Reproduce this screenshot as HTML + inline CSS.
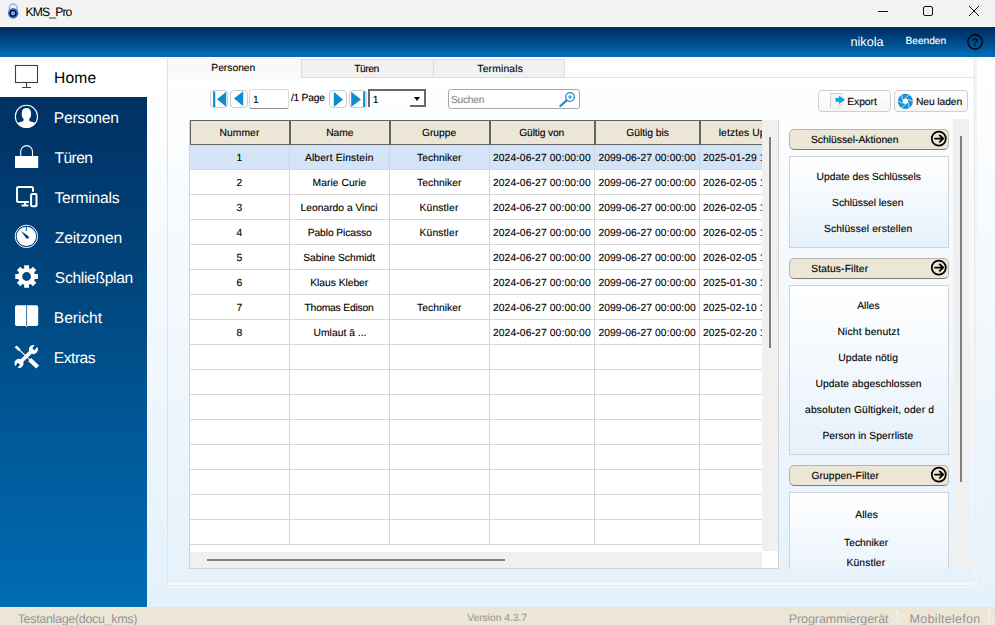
<!DOCTYPE html>
<html lang="de">
<head>
<meta charset="utf-8">
<title>KMS_Pro</title>
<style>
*{box-sizing:border-box;margin:0;padding:0}
html,body{width:995px;height:625px;overflow:hidden;background:#fff}
body{font-family:"Liberation Sans",sans-serif;font-size:10.3px;color:#000;position:relative;text-rendering:geometricPrecision}
.abs,.tx,svg{position:absolute}
.tx{white-space:nowrap;line-height:20px;display:block}
.sk{-webkit-text-stroke:0.12px}
#titlebar{left:0;top:0;width:995px;height:27px;background:#f3f3f3;border-bottom:1px solid #fff}
#hdr{left:0;top:27px;width:995px;height:30px;background:linear-gradient(#002b5d,#004a88 50%,#006fba)}
#side{left:0;top:57px;width:147px;height:550px;background:linear-gradient(#003263 0,#003366 60px,#004379 200px,#005a9a 393px,#006cb3 550px)}
#home{left:0;top:57px;width:167px;height:40px;background:#fff}
#mainbg{left:147px;top:57px;width:848px;height:550px;background:linear-gradient(#ffffff 0,#f6fafe 180px,#e4f1fb 549px)}
#status{left:0;top:607px;width:995px;height:18px;background:#ece6d7}
#panel{left:167px;top:58px;width:810px;height:529px;border:1px solid #f4f4f4;border-left-color:#e0e2e4;border-top:0;box-shadow:inset -1px 0 0 0 #f4f4f4,inset -2px -1px 0 0 #e9e9e9,inset -3px -3px 0 0 #fafafa}
.tab{top:59px;height:19px;background:#f1f1f1;border:1px solid #dddddd}
.tab.act{top:58px;height:21px;background:#f9f9f9;border:0}
#tabline{left:301px;top:77px;width:674px;height:1px;background:#e3e3e3}
#gw{left:189px;top:120px;width:590px;height:449px;background:#fff;border:1px solid #d2d2d2;border-top:0}
#grid{left:0;top:0;width:572px;height:431px;background:#fff;overflow:hidden}
.hc{top:0;height:25px;background:#ece6d6;border:1px solid #636363}
.row{left:0;width:572px;height:25px;border-bottom:1px solid #d8d8d8}
.row.sel{background:#d3e4f6}
.vl{top:25px;width:1px;height:400px;background:#d4d4d4}
#vsb{left:572px;top:0;width:16px;height:431px;background:#f0f0f0}
#vsb i{position:absolute;left:7px;top:17px;width:2px;height:211px;background:#7f7f7f}
#hsb{left:0;top:432px;width:572px;height:16px;background:#f0f0f0}
#hsb i{position:absolute;left:17px;top:7px;width:298px;height:2px;background:#7f7f7f}
.pb{top:90px;width:18px;height:18px;border:1px solid #cdcdcd;border-radius:4px;background:#fff}
#pgin{left:249px;top:89px;width:40px;height:20px;border:1px solid #dadada;border-bottom:1px solid #8e8e8e;border-radius:3px;background:#fff}
#pgsel{left:368px;top:89px;width:58px;height:18px;background:#fff;border-left:2px solid #696969;border-top:2px solid #696969}
#pgsel i{position:absolute;left:40px;top:0;width:16px;height:16px;border-right:2px solid #696969;border-bottom:2px solid #696969;background:#fff}
#pgsel b{position:absolute;left:44px;top:6px;width:0;height:0;border-left:3.5px solid transparent;border-right:3.5px solid transparent;border-top:4px solid #000}
#search{left:448px;top:89px;width:132px;height:20px;border:1px solid #a9a9a9;border-radius:3px;background:#fff}
.btn{top:90px;height:22px;border:1px solid #cfcfcf;border-radius:4px;background:linear-gradient(#ffffff,#f6f6f6)}
#rp{left:783px;top:119px;width:187px;height:450px;overflow:hidden}
#rsb{left:170px;top:0;width:16px;height:450px;background:#f0f0f0}
#rsb i{position:absolute;left:7px;top:17px;width:2px;height:346px;background:#7f7f7f}
.gh{left:6px;width:160px;height:21px;background:#ece6d6;border:1px solid #b9b5aa;border-bottom-color:#7d7a72;border-radius:5px}
.gb{left:6px;width:160px;border:1px solid #cfd3d6;background:linear-gradient(#ffffff,#e6f1fb)}
</style>
</head>
<body>
<div id="titlebar" class="abs"></div>
<svg style="left:6px;top:1px" width="16" height="20" viewBox="0 0 16 20">
<path d="M3.400 10V6.800a3.800 3.800 0 0 1 7.600 0V10" fill="none" stroke="#8fb6ee" stroke-width="1.400"/>
<circle cx="7.200" cy="12.300" r="5.200" fill="#2f74da"/>
<circle cx="7" cy="12.300" r="2.900" fill="#6fa4ee" stroke="#060a12" stroke-width="1.300"/>
</svg>
<span class="tx" style="left:25.60px;letter-spacing:-0.90px;top:2px;font-size:12.2px;color:#000;">KMS_Pro</span>
<svg style="left:870px;top:0" width="125" height="27" viewBox="0 0 125 27" fill="none" stroke="#111" stroke-width="1">
<path d="M8 11.5h10"/><rect x="53.5" y="6.5" width="9" height="9" rx="1.5"/><path d="M99 6l10 10M109 6l-10 10"/></svg>
<div id="hdr" class="abs"></div>
<span class="tx" style="left:850.50px;letter-spacing:-0.02px;top:32px;font-size:12.7px;color:#fff;">nikola</span>
<span class="tx sk" style="left:905.60px;letter-spacing:-0.10px;top:32px;font-size:10.3px;color:#fff;">Beenden</span>
<svg style="left:965px;top:32px" width="20" height="20" viewBox="0 0 20 20">
<circle cx="10.100" cy="9.900" r="7.200" fill="none" stroke="#000a1a" stroke-width="1.700"/>
<text x="10" y="14" text-anchor="middle" font-family="Liberation Sans,sans-serif" font-size="11" font-weight="bold" fill="#000a1a">?</text></svg>
<div id="mainbg" class="abs"></div>
<div id="side" class="abs"></div>
<div id="home" class="abs"></div>
<div id="panel" class="abs"></div>
<span class="tx" style="left:54.00px;letter-spacing:0.19px;top:69px;font-size:15.6px;color:#000;">Home</span>
<span class="tx" style="left:53.80px;letter-spacing:-0.24px;top:109px;font-size:15.6px;color:#fff;">Personen</span>
<span class="tx" style="left:54.40px;letter-spacing:-0.52px;top:149px;font-size:15.6px;color:#fff;">Türen</span>
<span class="tx" style="left:54.40px;letter-spacing:-0.20px;top:189px;font-size:15.6px;color:#fff;">Terminals</span>
<span class="tx" style="left:54.80px;letter-spacing:-0.15px;top:229px;font-size:15.6px;color:#fff;">Zeitzonen</span>
<span class="tx" style="left:54.80px;letter-spacing:-0.30px;top:269px;font-size:15.6px;color:#fff;">Schließplan</span>
<span class="tx" style="left:53.80px;letter-spacing:-0.05px;top:309px;font-size:15.6px;color:#fff;">Bericht</span>
<span class="tx" style="left:53.80px;letter-spacing:-0.48px;top:349px;font-size:15.6px;color:#fff;">Extras</span>
<svg style="left:0;top:57px" width="54" height="330" viewBox="0 57 54 330">
<g fill="none" stroke="#4a3d3d" stroke-width="1.1">
<rect x="15.5" y="65.5" width="22" height="17"/><path d="M26.5 82.5v5M22 87.5h9"/></g>
<g>
<circle cx="26.400" cy="116.400" r="11.100" fill="none" stroke="#fff" stroke-width="1.100"/>
<path d="M26.400 108C29.200 108 31 109.800 31 112.500L31 115.500C31 117 30 118 29.300 118.600L29.300 120.200C29.300 121 30 121.300 31 121.600L35.300 123A11.100 11.100 0 0 1 17.500 123L21.800 121.600C22.800 121.300 23.500 121 23.500 120.200L23.500 118.600C22.800 118 21.800 117 21.800 115.500L21.800 112.500C21.800 109.800 23.600 108 26.400 108Z" fill="#fff"/>
</g>
<g>
<rect x="15" y="156" width="23.200" height="12" fill="#fff"/>
<path d="M20.700 156.500v-5a5.900 5.900 0 0 1 11.800 0v5" fill="none" stroke="#fff" stroke-width="1.100"/>
</g>
<g fill="none" stroke="#fff" stroke-width="2">
<rect x="17" y="187" width="16" height="15" rx="1.500"/>
<path d="M25 202v3.500M21.500 205.500h7" />
<rect x="30.600" y="193.600" width="6.200" height="13.200" rx="1" fill="#00407a" stroke="#00407a" stroke-width="3.500"/>
<rect x="31.100" y="194.100" width="5.400" height="12.200" rx="1"/>
</g>
<g>
<circle cx="26.400" cy="236.400" r="11.200" fill="none" stroke="#fff" stroke-width="1"/>
<circle cx="26.400" cy="236.400" r="9.700" fill="#fff"/>
<path d="M21 231L28.300 235.900A1.600 1.600 0 1 1 26 238.100Z" fill="#00447f"/>
<path d="M26.300 231v-4.500h4.500" stroke="#00447f" stroke-width="1" fill="none"/>
</g>
<path d="M24.16 265.16L29.04 265.16L29.00 268.24L30.74 268.96L32.89 266.75L36.35 270.21L34.14 272.36L34.86 274.10L37.94 274.06L37.94 278.94L34.86 278.90L34.14 280.64L36.35 282.79L32.89 286.25L30.74 284.04L29.00 284.76L29.04 287.84L24.16 287.84L24.20 284.76L22.46 284.04L20.31 286.25L16.85 282.79L19.06 280.64L18.34 278.90L15.26 278.94L15.26 274.06L18.34 274.10L19.06 272.36L16.85 270.21L20.31 266.75L22.46 268.96L24.20 268.24ZM22.20 276.50a4.40 4.40 0 1 0 8.80 0a4.40 4.40 0 1 0 -8.80 0Z" fill="#fff" fill-rule="evenodd"/>
<g>
<rect x="15" y="305.200" width="23.200" height="20.800" rx="1.800" fill="#fff"/>
<path d="M26.600 305v21" stroke="#00508f" stroke-width="0.800"/>
<path d="M25.600 326h2l-1 1.300z" fill="#fff"/>
</g>
<g stroke="#fff" fill="none"><path d="M15.600 346.400l4.200 3.900" stroke-width="2.600"/><path d="M19 349.600L31 360.800" stroke-width="1.100"/><path d="M29.700 359.600l7.900 7.400" stroke-width="4.300"/></g>
<g transform="translate(26.2 356.45) rotate(-44)" fill="#fff"><rect x="-8" y="-1.90" width="16" height="3.80"/><path d="M14.35 -1.50A4.60 4.60 0 1 0 14.35 1.50L10.20 1.50L10.20 -1.50Z" transform="rotate(-12 10.00 0)"/><path d="M-14.35 -1.50A4.60 4.60 0 1 1 -14.35 1.50L-10.20 1.50L-10.20 -1.50Z" transform="rotate(-12 -10.00 0)"/></g>
</svg>
<div class="abs" id="tabline"></div>
<div class="abs tab act" style="left:168px;width:133px"></div>
<div class="abs tab" style="left:301px;width:133px"></div>
<div class="abs tab" style="left:433px;width:132px"></div>
<span class="tx sk" style="left:211.30px;letter-spacing:-0.01px;top:59px;font-size:10.3px;color:#000;">Personen</span>
<span class="tx sk" style="left:354.20px;letter-spacing:-0.47px;top:60px;font-size:10.3px;color:#000;">Türen</span>
<span class="tx sk" style="left:477.30px;letter-spacing:0.19px;top:60px;font-size:10.3px;color:#000;">Terminals</span>
<div class="abs pb" style="left:210px"><svg width="16" height="16" style="left:0;top:0"><rect x="2" y="0.5" width="2.3" height="15.5" fill="#1295d8"/><path d="M6 8.3L15.2 0.8V15.8z" fill="#0d8dd0"/></svg></div>
<div class="abs pb" style="left:230px"><svg width="16" height="16" style="left:0;top:0"><path d="M3 7.6L12.2 0.2V15z" fill="#0d8dd0"/></svg></div>
<div class="abs" id="pgin"></div>
<span class="tx sk" style="left:252.90px;letter-spacing:0.00px;top:91px;font-size:10.3px;color:#000;">1</span>
<span class="tx sk" style="left:290.90px;letter-spacing:-0.24px;top:89px;font-size:10.3px;color:#000;">/1 Page</span>
<div class="abs pb" style="left:329px"><svg width="16" height="16" style="left:0;top:0"><path d="M13 8.4L3.8 0.8V16z" fill="#0d8dd0"/></svg></div>
<div class="abs pb" style="left:349px"><svg width="16" height="16" style="left:0;top:0"><path d="M11 8.4L1.2 0.8V16z" fill="#0d8dd0"/><rect x="13" y="0.5" width="2.3" height="15.5" fill="#1295d8"/></svg></div>
<div class="abs" id="pgsel"><i></i><b></b></div>
<span class="tx sk" style="left:372.70px;letter-spacing:0.00px;top:91px;font-size:10.3px;color:#000;">1</span>
<div class="abs" id="search"></div>
<span class="tx sk" style="left:451.00px;letter-spacing:-0.30px;top:91px;font-size:10.3px;color:#8a8a8a;">Suchen</span>
<svg style="left:556px;top:90px" width="22" height="18" viewBox="0 0 22 18" fill="none">
<circle cx="14" cy="7" r="4.3" stroke="#1b8fd0" stroke-width="1.3"/><path d="M10.6 10.4L4.4 16" stroke="#1b8fd0" stroke-width="2.2" stroke-linecap="round"/>
<path d="M14 5.2v3.6M12.2 7h3.6" stroke="#1b8fd0" stroke-width="1.2"/></svg>
<div class="abs btn" style="left:818px;width:73px"></div>
<svg style="left:829px;top:92px" width="18" height="18" viewBox="0 0 18 18">
<path d="M1.500 1.500h12.300v11l-3.600 3.800H1.500z" fill="#f5f5f5" stroke="#e4e4e4" stroke-width="1"/>
<path d="M1.500 16V1.500H13" fill="none" stroke="#cdcdcd" stroke-width="1"/>
<path d="M10.200 16.300v-3.800h3.600" fill="none" stroke="#dcdcdc" stroke-width="0.800"/>
<path d="M6.6 5.9h3.4V3.8l6.1 4-6.1 4.1V9.8H6.6z" fill="#00a6dc"/></svg>
<span class="tx sk" style="left:847.30px;letter-spacing:-0.06px;top:93px;font-size:10.3px;color:#000;">Export</span>
<div class="abs btn" style="left:894px;width:74px"></div>
<svg style="left:896px;top:92px" width="19" height="19" viewBox="0 0 19 19"><g transform="translate(0.40 0.30)"><circle cx="9" cy="9" r="7.6" fill="#1a8fd2"/><path d="M11.82 10.03L12.86 15.93" stroke="#e8f3fa" stroke-width="0.8"/><path d="M9.52 11.95L4.92 15.81" stroke="#e8f3fa" stroke-width="0.8"/><path d="M6.70 10.93L1.06 8.88" stroke="#e8f3fa" stroke-width="0.8"/><path d="M6.18 7.97L5.14 2.07" stroke="#e8f3fa" stroke-width="0.8"/><path d="M8.48 6.05L13.08 2.19" stroke="#e8f3fa" stroke-width="0.8"/><path d="M11.30 7.07L16.94 9.12" stroke="#e8f3fa" stroke-width="0.8"/><path d="M11.82 10.03L9.52 11.95L6.70 10.93L6.18 7.97L8.48 6.05L11.30 7.07Z" fill="#fff"/></g></svg>
<span class="tx sk" style="left:916.00px;letter-spacing:-0.10px;top:93px;font-size:10.3px;color:#000;">Neu laden</span>
<div class="abs" id="gw"><div class="abs" id="grid">
<div class="abs row sel" style="top:25px"></div>
<div class="abs row" style="top:50px"></div>
<div class="abs row" style="top:75px"></div>
<div class="abs row" style="top:100px"></div>
<div class="abs row" style="top:125px"></div>
<div class="abs row" style="top:150px"></div>
<div class="abs row" style="top:175px"></div>
<div class="abs row" style="top:200px"></div>
<div class="abs row" style="top:225px"></div>
<div class="abs row" style="top:250px"></div>
<div class="abs row" style="top:275px"></div>
<div class="abs row" style="top:300px"></div>
<div class="abs row" style="top:325px"></div>
<div class="abs row" style="top:350px"></div>
<div class="abs row" style="top:375px"></div>
<div class="abs row" style="top:400px"></div>
<div class="abs vl" style="left:99px"></div>
<div class="abs vl" style="left:199px"></div>
<div class="abs vl" style="left:299px"></div>
<div class="abs vl" style="left:404px"></div>
<div class="abs vl" style="left:509px"></div>
<div class="abs hc" style="left:0px;width:100px"></div>
<div class="abs hc" style="left:100px;width:100px"></div>
<div class="abs hc" style="left:200px;width:100px"></div>
<div class="abs hc" style="left:300px;width:105px"></div>
<div class="abs hc" style="left:405px;width:105px"></div>
<div class="abs hc" style="left:510px;width:105px"></div>
<span class="tx sk" style="left:29.50px;letter-spacing:0.07px;top:4px;font-size:10.3px;color:#000;">Nummer</span>
<span class="tx sk" style="left:136.30px;letter-spacing:-0.11px;top:4px;font-size:10.3px;color:#000;">Name</span>
<span class="tx sk" style="left:231.90px;letter-spacing:0.02px;top:4px;font-size:10.3px;color:#000;">Gruppe</span>
<span class="tx sk" style="left:329.20px;letter-spacing:-0.14px;top:4px;font-size:10.3px;color:#000;">Gültig von</span>
<span class="tx sk" style="left:436.30px;letter-spacing:-0.03px;top:4px;font-size:10.3px;color:#000;">Gültig bis</span>
<span class="tx sk" style="left:528.70px;letter-spacing:0.12px;top:4px;font-size:10.3px;color:#000;">letztes Update</span>
<span class="tx sk" style="left:46.60px;letter-spacing:0.00px;top:29px;font-size:10.3px;color:#000;">1</span>
<span class="tx sk" style="left:114.90px;letter-spacing:0.15px;top:29px;font-size:10.3px;color:#000;">Albert Einstein</span>
<span class="tx sk" style="left:227.00px;letter-spacing:0.05px;top:29px;font-size:10.3px;color:#000;">Techniker</span>
<span class="tx sk" style="left:302.90px;letter-spacing:0.12px;top:29px;font-size:10.3px;color:#000;">2024-06-27 00:00:00</span>
<span class="tx sk" style="left:408.40px;letter-spacing:0.10px;top:29px;font-size:10.3px;color:#000;">2099-06-27 00:00:00</span>
<span class="tx sk" style="left:512.90px;letter-spacing:0.12px;top:29px;font-size:10.3px;color:#000;">2025-01-29 12:00:00</span>
<span class="tx sk" style="left:46.60px;letter-spacing:0.00px;top:54px;font-size:10.3px;color:#000;">2</span>
<span class="tx sk" style="left:122.50px;letter-spacing:0.05px;top:54px;font-size:10.3px;color:#000;">Marie Curie</span>
<span class="tx sk" style="left:227.00px;letter-spacing:0.05px;top:54px;font-size:10.3px;color:#000;">Techniker</span>
<span class="tx sk" style="left:302.90px;letter-spacing:0.12px;top:54px;font-size:10.3px;color:#000;">2024-06-27 00:00:00</span>
<span class="tx sk" style="left:408.40px;letter-spacing:0.10px;top:54px;font-size:10.3px;color:#000;">2099-06-27 00:00:00</span>
<span class="tx sk" style="left:512.90px;letter-spacing:0.12px;top:54px;font-size:10.3px;color:#000;">2026-02-05 12:00:00</span>
<span class="tx sk" style="left:46.60px;letter-spacing:0.00px;top:79px;font-size:10.3px;color:#000;">3</span>
<span class="tx sk" style="left:110.60px;letter-spacing:-0.01px;top:79px;font-size:10.3px;color:#000;">Leonardo a Vinci</span>
<span class="tx sk" style="left:229.60px;letter-spacing:0.14px;top:79px;font-size:10.3px;color:#000;">Künstler</span>
<span class="tx sk" style="left:302.90px;letter-spacing:0.12px;top:79px;font-size:10.3px;color:#000;">2024-06-27 00:00:00</span>
<span class="tx sk" style="left:408.40px;letter-spacing:0.10px;top:79px;font-size:10.3px;color:#000;">2099-06-27 00:00:00</span>
<span class="tx sk" style="left:512.90px;letter-spacing:0.12px;top:79px;font-size:10.3px;color:#000;">2026-02-05 12:00:00</span>
<span class="tx sk" style="left:46.60px;letter-spacing:0.00px;top:104px;font-size:10.3px;color:#000;">4</span>
<span class="tx sk" style="left:117.70px;letter-spacing:-0.10px;top:104px;font-size:10.3px;color:#000;">Pablo Picasso</span>
<span class="tx sk" style="left:229.60px;letter-spacing:0.14px;top:104px;font-size:10.3px;color:#000;">Künstler</span>
<span class="tx sk" style="left:302.90px;letter-spacing:0.12px;top:104px;font-size:10.3px;color:#000;">2024-06-27 00:00:00</span>
<span class="tx sk" style="left:408.40px;letter-spacing:0.10px;top:104px;font-size:10.3px;color:#000;">2099-06-27 00:00:00</span>
<span class="tx sk" style="left:512.90px;letter-spacing:0.12px;top:104px;font-size:10.3px;color:#000;">2026-02-05 12:00:00</span>
<span class="tx sk" style="left:46.60px;letter-spacing:0.00px;top:129px;font-size:10.3px;color:#000;">5</span>
<span class="tx sk" style="left:113.20px;letter-spacing:-0.02px;top:129px;font-size:10.3px;color:#000;">Sabine Schmidt</span>
<span class="tx sk" style="left:302.90px;letter-spacing:0.12px;top:129px;font-size:10.3px;color:#000;">2024-06-27 00:00:00</span>
<span class="tx sk" style="left:408.40px;letter-spacing:0.10px;top:129px;font-size:10.3px;color:#000;">2099-06-27 00:00:00</span>
<span class="tx sk" style="left:512.90px;letter-spacing:0.12px;top:129px;font-size:10.3px;color:#000;">2026-02-05 12:00:00</span>
<span class="tx sk" style="left:46.60px;letter-spacing:0.00px;top:154px;font-size:10.3px;color:#000;">6</span>
<span class="tx sk" style="left:120.30px;letter-spacing:-0.04px;top:154px;font-size:10.3px;color:#000;">Klaus Kleber</span>
<span class="tx sk" style="left:302.90px;letter-spacing:0.12px;top:154px;font-size:10.3px;color:#000;">2024-06-27 00:00:00</span>
<span class="tx sk" style="left:408.40px;letter-spacing:0.10px;top:154px;font-size:10.3px;color:#000;">2099-06-27 00:00:00</span>
<span class="tx sk" style="left:512.90px;letter-spacing:0.12px;top:154px;font-size:10.3px;color:#000;">2025-01-30 12:00:00</span>
<span class="tx sk" style="left:46.60px;letter-spacing:0.00px;top:179px;font-size:10.3px;color:#000;">7</span>
<span class="tx sk" style="left:114.50px;letter-spacing:-0.19px;top:179px;font-size:10.3px;color:#000;">Thomas Edison</span>
<span class="tx sk" style="left:227.00px;letter-spacing:0.05px;top:179px;font-size:10.3px;color:#000;">Techniker</span>
<span class="tx sk" style="left:302.90px;letter-spacing:0.12px;top:179px;font-size:10.3px;color:#000;">2024-06-27 00:00:00</span>
<span class="tx sk" style="left:408.40px;letter-spacing:0.10px;top:179px;font-size:10.3px;color:#000;">2099-06-27 00:00:00</span>
<span class="tx sk" style="left:512.90px;letter-spacing:0.12px;top:179px;font-size:10.3px;color:#000;">2025-02-10 12:00:00</span>
<span class="tx sk" style="left:46.60px;letter-spacing:0.00px;top:204px;font-size:10.3px;color:#000;">8</span>
<span class="tx sk" style="left:123.50px;letter-spacing:0.03px;top:204px;font-size:10.3px;color:#000;">Umlaut ä ...</span>
<span class="tx sk" style="left:302.90px;letter-spacing:0.12px;top:204px;font-size:10.3px;color:#000;">2024-06-27 00:00:00</span>
<span class="tx sk" style="left:408.40px;letter-spacing:0.10px;top:204px;font-size:10.3px;color:#000;">2099-06-27 00:00:00</span>
<span class="tx sk" style="left:512.90px;letter-spacing:0.12px;top:204px;font-size:10.3px;color:#000;">2025-02-20 12:00:00</span>
</div>
<div class="abs" id="vsb"><i></i></div>
<div class="abs" id="hsb"><i></i></div></div>
<div class="abs" id="rp">
<div class="abs gh" style="top:10px"></div>
<svg style="left:146px;top:10px" width="19" height="19" viewBox="0 0 19 19" fill="none" stroke="#000"><g transform="translate(0.80 0.60)">
<circle cx="9" cy="9" r="7" stroke-width="1.700"/><path d="M4.500 9h8.500M9.500 5.200L13.300 9l-3.800 3.800" stroke-width="1.900"/></g></svg>
<div class="abs gh" style="top:139px"></div>
<svg style="left:146px;top:139px" width="19" height="19" viewBox="0 0 19 19" fill="none" stroke="#000"><g transform="translate(0.80 0.60)">
<circle cx="9" cy="9" r="7" stroke-width="1.700"/><path d="M4.500 9h8.500M9.500 5.200L13.300 9l-3.800 3.800" stroke-width="1.900"/></g></svg>
<div class="abs gh" style="top:346px"></div>
<svg style="left:146px;top:346px" width="19" height="19" viewBox="0 0 19 19" fill="none" stroke="#000"><g transform="translate(0.80 0.60)">
<circle cx="9" cy="9" r="7" stroke-width="1.700"/><path d="M4.500 9h8.500M9.500 5.200L13.300 9l-3.800 3.800" stroke-width="1.900"/></g></svg>
<div class="abs gb" style="top:37px;height:92px"></div>
<div class="abs gb" style="top:166px;height:170px"></div>
<div class="abs gb" style="top:373px;height:100px"></div>
<span class="tx sk" style="left:28.00px;letter-spacing:-0.00px;top:12px;font-size:10.3px;color:#000;">Schlüssel-Aktionen</span>
<span class="tx sk" style="left:28.20px;letter-spacing:0.12px;top:141px;font-size:10.3px;color:#000;">Status-Filter</span>
<span class="tx sk" style="left:28.40px;letter-spacing:0.09px;top:348px;font-size:10.3px;color:#000;">Gruppen-Filter</span>
<span class="tx sk" style="left:33.60px;letter-spacing:-0.02px;top:49px;font-size:10.3px;color:#000;">Update des Schlüssels</span>
<span class="tx sk" style="left:49.10px;letter-spacing:-0.02px;top:75px;font-size:10.3px;color:#000;">Schlüssel lesen</span>
<span class="tx sk" style="left:40.90px;letter-spacing:0.14px;top:101px;font-size:10.3px;color:#000;">Schlüssel erstellen</span>
<span class="tx sk" style="left:74.20px;letter-spacing:0.06px;top:178px;font-size:10.3px;color:#000;">Alles</span>
<span class="tx sk" style="left:54.40px;letter-spacing:0.17px;top:204px;font-size:10.3px;color:#000;">Nicht benutzt</span>
<span class="tx sk" style="left:55.30px;letter-spacing:0.11px;top:230px;font-size:10.3px;color:#000;">Update nötig</span>
<span class="tx sk" style="left:32.50px;letter-spacing:0.07px;top:256px;font-size:10.3px;color:#000;">Update abgeschlossen</span>
<span class="tx sk" style="left:22.10px;letter-spacing:0.13px;top:282px;font-size:10.3px;color:#000;">absoluten Gültigkeit, oder d</span>
<span class="tx sk" style="left:39.40px;letter-spacing:0.05px;top:308px;font-size:10.3px;color:#000;">Person in Sperrliste</span>
<span class="tx sk" style="left:72.20px;letter-spacing:0.11px;top:387px;font-size:10.3px;color:#000;">Alles</span>
<span class="tx sk" style="left:61.10px;letter-spacing:-0.00px;top:415px;font-size:10.3px;color:#000;">Techniker</span>
<span class="tx sk" style="left:63.40px;letter-spacing:0.14px;top:435px;font-size:10.3px;color:#000;">Künstler</span>
<div class="abs" id="rsb"><i></i></div>
</div>
<div id="status" class="abs"></div>
<span class="tx" style="left:17.70px;letter-spacing:-0.32px;top:609px;font-size:12.5px;color:#959595;">Testanlage(docu_kms)</span>
<span class="tx sk" style="left:467.20px;letter-spacing:-0.02px;top:609px;font-size:10.3px;color:#9a9a9a;">Version 4.3.7</span>
<span class="tx" style="left:788.70px;letter-spacing:-0.06px;top:609px;font-size:12.5px;color:#959595;">Programmiergerät</span>
<span class="tx" style="left:909.60px;letter-spacing:0.30px;top:609px;font-size:12.5px;color:#959595;">Mobiltelefon</span>
<svg style="left:892px;top:610px" width="10" height="16" viewBox="0 0 10 16" fill="none" stroke="#f6f3ea" stroke-width="1">
<path d="M5 1.500v14M5 12L1.500 9V6.500M5 10.500L8.500 8V5"/><path d="M3.800 3L5 0.800 6.200 3z" fill="#f6f3ea"/></svg><svg style="left:984px;top:610px" width="10" height="16" viewBox="0 0 10 16" fill="none" stroke="#f6f3ea" stroke-width="1">
<path d="M5 1.500v14M5 12L1.500 9V6.500M5 10.500L8.500 8V5"/><path d="M3.800 3L5 0.800 6.200 3z" fill="#f6f3ea"/></svg>
</body>
</html>
